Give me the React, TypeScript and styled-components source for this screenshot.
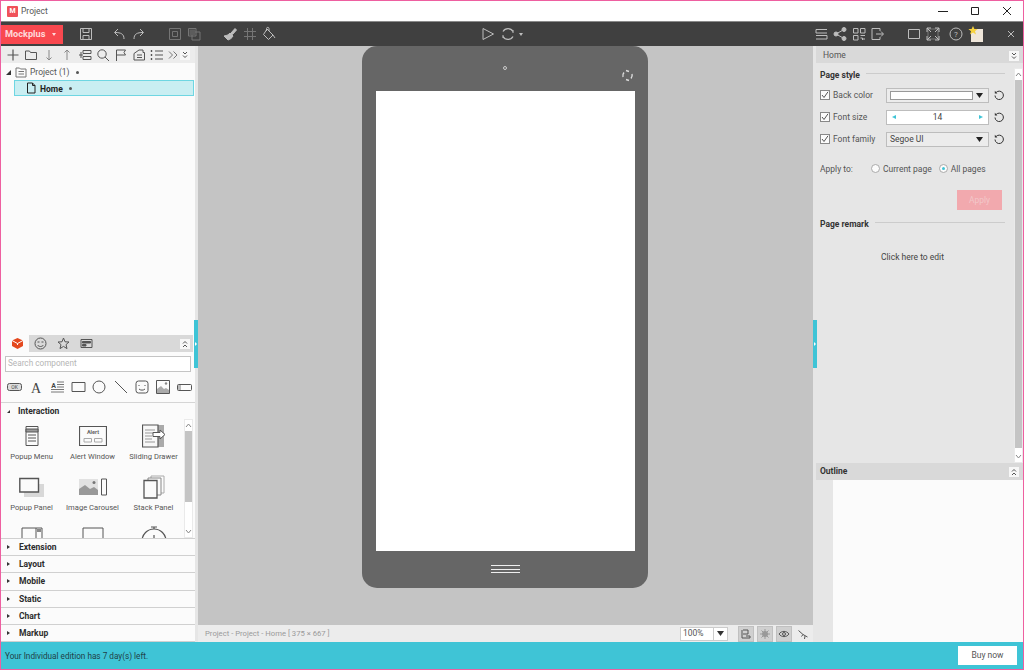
import type { ReactNode } from "react";
import styled, { createGlobalStyle } from "styled-components";

const Global = createGlobalStyle`
  html, body { margin: 0; padding: 0; background: #fff; }
  body { font-family: Roboto, "Noto Sans", sans-serif; font-size: 8.5px; line-height: 1.2; color: #444; }
  * { box-sizing: border-box; }
`;

const Window = styled.div`
  width: 1024px;
  height: 670px;
  display: flex;
  flex-direction: column;
  overflow: hidden;
  border: 1px solid #ee5fa0;
  background: #fff;
`;

const TitleBar = styled.div`
  height: 20px;
  flex-shrink: 0;
  display: flex;
  align-items: center;
  padding-left: 6px;
  background: #fff;
`;

const AppLogo = styled.span`
  width: 11px;
  height: 11px;
  background: #f0525a;
  color: #fff;
  font-size: 7px;
  font-weight: 700;
  line-height: 11px;
  text-align: center;
  border-radius: 1px;
`;

const TitleText = styled.span`
  margin-left: 3px;
  font-size: 8.5px;
  color: #555;
`;

const WinButtons = styled.div`
  margin-left: auto;
  display: flex;
`;

const WinButton = styled.div`
  width: 32px;
  height: 20px;
  display: flex;
  align-items: center;
  justify-content: center;
  color: #222;
`;

const Toolbar = styled.div`
  height: 25px;
  flex-shrink: 0;
  display: flex;
  align-items: center;
  background: #404040;
  border-top: 1px solid #8a8a8a;
`;

const BrandButton = styled.div`
  width: 62px;
  height: 19px;
  display: flex;
  align-items: center;
  padding-left: 4px;
  gap: 7px;
  background: #f9484f;
  color: #ffd9db;
  font-size: 9.2px;
  font-weight: 700;
`;

const Caret = styled.span`
  width: 0;
  height: 0;
  border-left: 2.5px solid transparent;
  border-right: 2.5px solid transparent;
  border-top: 3px solid currentColor;
`;

const Tool = styled.div<{ $ml?: number; $w?: number; $dim?: boolean }>`
  width: ${({ $w }) => $w ?? 18}px;
  height: 18px;
  flex-shrink: 0;
  margin-left: ${({ $ml }) => $ml ?? 0}px;
  display: flex;
  align-items: center;
  justify-content: center;
  color: ${({ $dim }) => ($dim ? "#757575" : "#bdbdbd")};
`;

const Main = styled.div`
  flex: 1;
  min-height: 0;
  display: flex;
  position: relative;
`;

const LeftPanel = styled.div`
  width: 194px;
  flex-shrink: 0;
  display: flex;
  flex-direction: column;
  background: #fbfbfb;
`;

const LeftTools = styled.div`
  height: 17px;
  flex-shrink: 0;
  display: flex;
  align-items: center;
  padding-left: 3px;
  background: #ececec;
  color: #444;
`;

const SmallTool = styled.div<{ $ml?: number; $w?: number; $c?: string }>`
  width: ${({ $w }) => $w ?? 18}px;
  height: 16px;
  margin-left: ${({ $ml }) => $ml ?? 0}px;
  flex-shrink: 0;
  display: flex;
  align-items: center;
  justify-content: center;
  color: ${({ $c }) => $c ?? "#555"};
`;

const Collapse = styled.div<{ $ml?: number }>`
  width: 10px;
  height: 10px;
  margin-left: ${({ $ml }) => $ml ?? 0}px;
  flex-shrink: 0;
  display: flex;
  align-items: center;
  justify-content: center;
  background: #f7f7f7;
  color: #555;
`;

const Tree = styled.div`
  flex: 1;
  display: flex;
  flex-direction: column;
  padding-top: 1px;
`;

const TreeRow = styled.div<{ $selected?: boolean }>`
  height: 16px;
  display: flex;
  align-items: center;
  margin-left: ${({ $selected }) => ($selected ? 13 : 3)}px;
  margin-right: 1px;
  background: ${({ $selected }) => ($selected ? "#c9eef2" : "transparent")};
  border: 1px solid ${({ $selected }) => ($selected ? "#6ed6e2" : "transparent")};
`;

const TreeArrow = styled.span`
  width: 0;
  height: 0;
  margin-left: 1px;
  border-left: 5px solid transparent;
  border-bottom: 5px solid #333;
`;

const TreeLabel = styled.span<{ $bold?: boolean }>`
  margin-left: 2px;
  margin-top: ${({ $bold }) => ($bold ? 2 : 0)}px;
  font-weight: ${({ $bold }) => ($bold ? 700 : 400)};
  color: ${({ $bold }) => ($bold ? "#222" : "#555")};
`;

const TreeDot = styled.span`
  width: 3px;
  height: 3px;
  margin-left: 6px;
  border-radius: 50%;
  background: #555;
`;

const Library = styled.div`
  height: 307px;
  flex-shrink: 0;
  display: flex;
  flex-direction: column;
`;

const LibTabs = styled.div`
  height: 17px;
  flex-shrink: 0;
  margin: 0 2px 0 4px;
  display: flex;
  align-items: stretch;
  background: #d9d9d9;
`;

const LibTab = styled.div<{ $active?: boolean; $w?: number }>`
  width: ${({ $w }) => $w ?? 23}px;
  display: flex;
  align-items: center;
  justify-content: center;
  background: ${({ $active }) => ($active ? "#fbfbfb" : "transparent")};
  color: #555;
`;

const LibCollapse = styled.div`
  margin-left: auto;
  margin-right: 3px;
  display: flex;
  align-items: center;
`;

const SearchBox = styled.div`
  height: 16px;
  margin: 4px 4px 0 4px;
  flex-shrink: 0;
  display: flex;
  align-items: center;
  padding-left: 2px;
  background: #fff;
  border: 1px solid #c4c4c4;
  color: #b5b5b5;
  font-size: 8.2px;
`;

const ShapeRow = styled.div`
  height: 31px;
  flex-shrink: 0;
  display: flex;
  align-items: center;
  padding-left: 3px;
  border-bottom: 1px solid #d5d5d5;
  color: #555;
`;

const Shape = styled.div`
  width: 21.4px;
  display: flex;
  align-items: center;
  justify-content: center;
`;

const SectionHead = styled.div<{ $open?: boolean }>`
  flex-shrink: 0;
  height: ${({ $open }) => ($open ? 16 : 17.2)}px;
  display: flex;
  align-items: center;
  padding-left: 6px;
  font-weight: 700;
  color: #2c2c2c;
  background: #fbfbfb;
  border-bottom: ${({ $open }) => ($open ? "none" : "1px solid #d0d0d0")};
`;

const SectionArrow = styled.span<{ $open?: boolean }>`
  width: 0;
  height: 0;
  margin-right: 8px;
  ${({ $open }) =>
    $open
      ? "border-left: 3.5px solid transparent; border-bottom: 3.5px solid #333;"
      : "border-left: 3px solid #333; border-top: 2px solid transparent; border-bottom: 2px solid transparent; margin-right: 9px;"}
`;

const InteractionBody = styled.div`
  height: 119px;
  flex-shrink: 0;
  display: flex;
  overflow: hidden;
`;

const CompGrid = styled.div`
  width: 183px;
  display: grid;
  grid-template-columns: repeat(3, 61px);
  grid-auto-rows: 51px;
  padding-top: 4px;
`;

const Comp = styled.div`
  display: flex;
  flex-direction: column;
  align-items: center;
  color: #555;
`;

const CompIcon = styled.div`
  height: 26px;
  width: 50px;
  display: flex;
  align-items: center;
  justify-content: center;
`;

const CompLabel = styled.div`
  margin-top: 3px;
  font-size: 7.6px;
  white-space: nowrap;
  color: #555;
`;

const Scroll = styled.div<{ $w?: number }>`
  width: ${({ $w }) => $w ?? 9}px;
  flex-shrink: 0;
  display: flex;
  flex-direction: column;
  align-items: stretch;
  justify-content: space-between;
  background: #fff;
  border: 1px solid #eaeaea;
`;

const ScrollTop = styled.div`
  display: flex;
  flex-direction: column;
`;

const ScrollBtn = styled.div`
  height: 11px;
  flex-shrink: 0;
  display: flex;
  align-items: center;
  justify-content: center;
  color: #888;
`;

const ScrollThumb = styled.div<{ $h: number }>`
  height: ${({ $h }) => $h}px;
  background: #c4c4c4;
`;

const Sections = styled.div`
  flex: 1;
  display: flex;
  flex-direction: column;
  border-top: 1px solid #d0d0d0;
`;

const Gutter = styled.div`
  width: 3px;
  flex-shrink: 0;
  background: #e6e6e6;
`;

const Handle = styled.div<{ $left: number; $w: number }>`
  position: absolute;
  left: ${({ $left }) => $left}px;
  top: 274px;
  width: ${({ $w }) => $w}px;
  height: 48px;
  background: #3fc4d6;
  display: flex;
  align-items: center;
  justify-content: center;

  &::after {
    content: "";
    border-left: 2px solid #fff;
    border-top: 2px solid transparent;
    border-bottom: 2px solid transparent;
  }
`;

const Center = styled.div`
  flex: 1;
  min-width: 0;
  display: flex;
  flex-direction: column;
`;

const Canvas = styled.div`
  flex: 1;
  min-height: 0;
  display: flex;
  justify-content: center;
  padding-right: 2px;
  background: #c4c4c4;
`;

const Phone = styled.div`
  position: relative;
  width: 286px;
  height: 542px;
  padding: 45px 13px 37px 14px;
  border-radius: 15px;
  background: #666;
`;

const Camera = styled.span`
  position: absolute;
  top: 20px;
  left: 141px;
  width: 4px;
  height: 4px;
  border-radius: 50%;
  border: 1px solid #ccc;
`;

const Rotate = styled.div`
  position: absolute;
  top: 23px;
  right: 14px;
  color: #ddd;
  display: flex;
`;

const Screen = styled.div`
  height: 100%;
  background: #fff;
`;

const HomeLines = styled.div`
  position: absolute;
  bottom: 15px;
  left: 129px;
  width: 29px;
  height: 8px;
  border-top: 1px solid #eee;
  border-bottom: 1px solid #eee;
  display: flex;
  align-items: center;

  &::before {
    content: "";
    width: 100%;
    height: 1px;
    background: #eee;
  }
`;

const StatusBar = styled.div`
  height: 17px;
  flex-shrink: 0;
  display: flex;
  align-items: center;
  padding-left: 7px;
  background: #ececec;
  color: #9a9a9a;
  font-size: 7.7px;
`;

const ZoomSelect = styled.div`
  margin-left: auto;
  width: 48px;
  height: 14px;
  display: flex;
  align-items: center;
  background: #fff;
  border: 1px solid #ccc;
  color: #555;
  font-size: 8.5px;
  padding-left: 2px;
`;

const ZoomArrow = styled.div`
  margin-left: auto;
  width: 14px;
  height: 100%;
  border-left: 1px solid #ccc;
  display: flex;
  align-items: center;
  justify-content: center;
  color: #333;
`;

const ToggleRow = styled.div`
  margin-left: 10px;
  margin-right: 2px;
  display: flex;
  align-items: center;
  gap: 3px;
`;

const Toggle = styled.div<{ $on?: boolean }>`
  width: 16px;
  height: 16px;
  display: flex;
  align-items: center;
  justify-content: center;
  background: ${({ $on }) => ($on ? "#d0d0d0" : "transparent")};
  border: 1px solid ${({ $on }) => ($on ? "#c0c0c0" : "transparent")};
  color: #555;
`;

const RightPanel = styled.div`
  width: 210px;
  flex-shrink: 0;
  display: flex;
  flex-direction: column;
  background: #e6e6e6;
  padding-left: 3px;
`;

const PanelHead = styled.div`
  height: 17px;
  flex-shrink: 0;
  display: flex;
  align-items: center;
  justify-content: space-between;
  padding: 2px 4px 0 7px;
  background: #d9d9d9;
  color: #555;
`;

const OutlineHead = styled(PanelHead)`
  padding: 0 4px 0 4px;
  font-weight: 700;
  color: #333;
`;

const StyleArea = styled.div`
  height: 400px;
  flex-shrink: 0;
  display: flex;
  padding-top: 5px;
`;

const Props = styled.div`
  flex: 1;
  padding: 0 9px 0 4px;
  display: flex;
  flex-direction: column;
`;

const GroupTitle = styled.div`
  display: flex;
  align-items: center;
  gap: 6px;
  font-weight: 700;
  color: #333;
  height: 14px;
  margin-bottom: 2px;

  &::after {
    content: "";
    flex: 1;
    height: 1px;
    background: #cccccc;
    margin-top: -3px;
  }
`;

const PropRow = styled.div`
  height: 22px;
  display: flex;
  align-items: center;
`;

const Check = styled.span`
  width: 10px;
  height: 10px;
  flex-shrink: 0;
  display: flex;
  align-items: center;
  justify-content: center;
  background: #fbfbfb;
  border: 1px solid #888;
  color: #555;
`;

const PropLabel = styled.span`
  margin-left: 3px;
  width: 53px;
  flex-shrink: 0;
  color: #555;
`;

const Field = styled.div<{ $bg?: string }>`
  width: 103px;
  height: 15px;
  display: flex;
  align-items: center;
  padding: 0 3px;
  background: ${({ $bg }) => $bg ?? "#fff"};
  border: 1px solid #bdbdbd;
  color: #444;
`;

const Swatch = styled.span`
  flex: 1;
  height: 9px;
  background: #fff;
  border: 1px solid #999;
`;

const SelectArrow = styled.span`
  margin-left: auto;
  width: 12px;
  display: flex;
  justify-content: center;
  color: #222;
`;

const Spin = styled.span`
  width: 0;
  height: 0;
  border-top: 2.5px solid transparent;
  border-bottom: 2.5px solid transparent;
`;

const SpinLeft = styled(Spin)`
  border-right: 4px solid #3fc4d6;
  margin-left: 2px;
`;

const SpinRight = styled(Spin)`
  border-left: 4px solid #3fc4d6;
  margin-right: 2px;
`;

const SpinValue = styled.span`
  flex: 1;
  text-align: center;
`;

const Reset = styled.div`
  margin-left: 4px;
  display: flex;
  color: #333;
`;

const ApplyRow = styled.div`
  margin-top: 11px;
  height: 16px;
  display: flex;
  align-items: center;
  color: #555;
`;

const ApplyLabel = styled.span`
  width: 51px;
`;

const Radio = styled.span<{ $on?: boolean; $ml?: number }>`
  width: 9px;
  height: 9px;
  margin-left: ${({ $ml }) => $ml ?? 0}px;
  margin-top: -2px;
  flex-shrink: 0;
  display: flex;
  align-items: center;
  justify-content: center;
  border-radius: 50%;
  background: #fbfbfb;
  border: 1px solid #aaa;

  &::after {
    content: "";
    display: ${({ $on }) => ($on ? "block" : "none")};
    width: 3px;
    height: 3px;
    border-radius: 50%;
    background: #3fc4d6;
  }
`;

const RadioLabel = styled.span`
  margin-left: 3px;
`;

const ApplyButton = styled.div`
  margin: 13px 3px 0 auto;
  width: 45px;
  height: 20px;
  display: flex;
  align-items: center;
  justify-content: center;
  background: #f2a9ae;
  color: #f3c7c9;
`;

const RemarkTitle = styled(GroupTitle)`
  margin-top: 7px;
  margin-bottom: 0;
`;

const EditHint = styled.div`
  margin-top: 21px;
  text-align: center;
  color: #444;
`;

const OutlineBody = styled.div`
  flex: 1;
  margin-left: 17px;
  background: #fbfbfb;
`;

const BottomBar = styled.div`
  height: 27px;
  flex-shrink: 0;
  display: flex;
  align-items: center;
  justify-content: space-between;
  padding: 0 6px 0 4px;
  background: #3fc4d6;
  color: #1f3f46;
`;

const TrialText = styled.span`
  margin-top: 2px;
  font-size: 8.2px;
`;

const BuyButton = styled.div`
  width: 59px;
  height: 19px;
  display: flex;
  align-items: center;
  justify-content: center;
  background: #fff;
  color: #555;
`;

function Ico({ size = 16, children, w }: { size?: number; w?: number; children: ReactNode }) {
  return (
    <svg
      width={w ?? size}
      height={size}
      viewBox={`0 0 ${w ?? size} ${size}`}
      fill="none"
      stroke="currentColor"
      strokeWidth="1"
    >
      {children}
    </svg>
  );
}

const Chevrons = ({ up }: { up?: boolean }) => (
  <Ico size={8}>
    {up ? <path d="M2 3.5 4 1.5 6 3.5M2 7 4 5 6 7" /> : <path d="M2 1 4 3 6 1M2 4.5 4 6.5 6 4.5" />}
  </Ico>
);

const ResetIcon = () => (
  <Ico size={12}>
    <path d="M3.2 3.4A4.2 4.2 0 1 1 2 6.5" />
    <path d="M1.8 1.8V4.4H4.4" fill="currentColor" stroke="none" />
  </Ico>
);

const Tick = () => (
  <Ico size={8}>
    <path d="M1 4 3 6.5 7 .8" />
  </Ico>
);

const DownCaret = () => (
  <svg width="7" height="5" viewBox="0 0 7 5">
    <path d="M0 0H7L3.5 5Z" fill="currentColor" />
  </svg>
);

const sections = ["Extension", "Layout", "Mobile", "Static", "Chart", "Markup"];

// the third row is scrolled past the edge of the list, so its labels are not in view
const comps: { id: string; label?: string; icon: ReactNode }[] = [
  {
    id: "popup-menu",
    label: "Popup Menu",
    icon: (
      <Ico size={22} w={16}>
        <path d="M2 1.5H14V20.5H2Z" />
        <path d="M2 4H14V7H2Z" fill="#999" />
        <path d="M4 10H12M4 13H12M4 16H12" />
      </Ico>
    ),
  },
  {
    id: "alert",
    label: "Alert Window",
    icon: (
      <svg width="28" height="22" viewBox="0 0 28 22" fill="none" stroke="#555">
        <path d="M.5 1.5H27.5V20.5H.5Z" strokeWidth="1.2" />
        <text x="14" y="8.5" fontSize="5.5" fontWeight="700" textAnchor="middle" fill="#666" stroke="none">
          Alert
        </text>
        <path d="M5 13.5H12.5V17H5ZM15.5 13.5H23V17H15.5Z" stroke="#aaa" />
      </svg>
    ),
  },
  {
    id: "drawer",
    label: "Sliding Drawer",
    icon: (
      <svg width="24" height="24" viewBox="0 0 24 24" fill="none" stroke="#555">
        <path d="M15 1H22V23H15Z" fill="#aaa" stroke="none" />
        <path d="M.5 1H16V23H.5Z" strokeWidth="1.2" fill="#f8f8f8" />
        <path d="M3 6H13M3 9H13M3 12H10M3 15H10M3 18H13" stroke="#999" />
        <path d="M11 8.5H18V6L23 10.5 18 15V12.5H11Z" fill="#fff" />
      </svg>
    ),
  },
  {
    id: "popup-panel",
    label: "Popup Panel",
    icon: (
      <svg width="26" height="22" viewBox="0 0 26 22" fill="none" stroke="#555">
        <path d="M5 8H25V21H5Z" fill="#d8d8d8" stroke="none" />
        <path d="M.8 2.5H19.5V16H.8Z" fill="#fbfbfb" strokeWidth="1.4" />
      </svg>
    ),
  },
  {
    id: "carousel",
    label: "Image Carousel",
    icon: (
      <svg width="28" height="18" viewBox="0 0 28 18" fill="none" stroke="#555">
        <path d="M0 1H19V17H0Z" fill="#e2e2e2" stroke="none" />
        <path d="M0 17V11L6 7 11 11 15 9 19 12V17Z" fill="#999" stroke="none" />
        <circle cx="15" cy="4.5" r="1.5" fill="#777" stroke="none" />
        <path d="M22.5 1H27.5V17H22.5Z" />
      </svg>
    ),
  },
  {
    id: "stack",
    label: "Stack Panel",
    icon: (
      <svg width="22" height="24" viewBox="0 0 22 24" fill="none" stroke="#555">
        <path d="M8 1H21V18H8Z" stroke="#aaa" />
        <path d="M5 3H18V20H5Z" stroke="#888" fill="#fbfbfb" />
        <path d="M1 5.5H14V23H1Z" strokeWidth="1.3" fill="#fbfbfb" />
      </svg>
    ),
  },
  {
    id: "third-a",
    icon: (
      <svg width="22" height="24" viewBox="0 0 22 24" fill="none" stroke="#555">
        <path d="M1 2H21V24H1ZM15 2V24" />
        <path d="M16 3H20V6H16Z" fill="#888" stroke="none" />
      </svg>
    ),
  },
  {
    id: "third-b",
    icon: (
      <svg width="22" height="24" viewBox="0 0 22 24" fill="none" stroke="#555">
        <path d="M1 2H21V24H1Z" />
      </svg>
    ),
  },
  {
    id: "third-c",
    icon: (
      <svg width="26" height="24" viewBox="0 0 26 24" fill="none" stroke="#555" strokeWidth="1.2">
        <circle cx="13" cy="15" r="12" />
        <path d="M10 1H16M13 1V3M13 9V15" />
      </svg>
    ),
  },
];

export default function App() {
  return (
    <>
      <Global />
      <Window>
        <TitleBar>
          <AppLogo>M</AppLogo>
          <TitleText>Project</TitleText>
          <WinButtons>
            <WinButton>
              <Ico size={10}>
                <path d="M0 5.5H10" />
              </Ico>
            </WinButton>
            <WinButton>
              <Ico size={10}>
                <path d="M1.5 1.5H8.5V8.5H1.5Z" />
              </Ico>
            </WinButton>
            <WinButton>
              <Ico size={10}>
                <path d="M1 1 9 9M9 1 1 9" />
              </Ico>
            </WinButton>
          </WinButtons>
        </TitleBar>

        <Toolbar>
          <BrandButton>
            Mockplus
            <Caret />
          </BrandButton>
          <Tool $ml={14}>
            <Ico>
              <path d="M2.5 2.5H13.5V13.5H2.5Z" />
              <path d="M5 2.5V6.5H11V2.5M5 13.5V9.5H11V13.5" />
            </Ico>
          </Tool>
          <Tool $ml={15}>
            <Ico>
              <path d="M13 13C13 8 10 6.5 4 6.5" />
              <path d="M7 3 3.5 6.5 7 10" />
            </Ico>
          </Tool>
          <Tool $ml={2}>
            <Ico>
              <path d="M3 13C3 8 6 6.5 12 6.5" />
              <path d="M9 3 12.5 6.5 9 10" />
            </Ico>
          </Tool>
          <Tool $ml={18} $dim>
            <Ico>
              <path d="M2.5 2.5H13.5V13.5H2.5Z" />
              <path d="M5.5 5.5H10.5V10.5H5.5Z" />
            </Ico>
          </Tool>
          <Tool $ml={1} $dim>
            <Ico>
              <path d="M2.5 2.5H10V10H2.5Z" />
              <path d="M6 6H14V14H6Z" />
              <path d="M3.5 3.5H9V9H3.5Z" fill="#5c5c5c" stroke="none" />
            </Ico>
          </Tool>
          <Tool $ml={18}>
            <Ico>
              <path d="M9 7 13 2.5 14.5 4 10.5 8.5Z" fill="currentColor" />
              <path d="M2 10C5 9.5 7 8.5 8 7L11 10C10 12 8 13.5 6 14Z" fill="currentColor" />
            </Ico>
          </Tool>
          <Tool $ml={2} $dim>
            <Ico>
              <path d="M5.5 2V14M10.5 2V14M2 5.5H14M2 10.5H14" />
            </Ico>
          </Tool>
          <Tool $ml={1}>
            <Ico>
              <path d="M6 3 12 9 7.5 13.5 2.5 8.5Z" />
              <path d="M5.5 5V2.5C5.5 1 8 1 8 2.5V5M12 9 14 12" />
            </Ico>
          </Tool>
          <Tool $ml={201}>
            <Ico>
              <path d="M3 2.5 13.5 8 3 13.5Z" />
            </Ico>
          </Tool>
          <Tool $ml={2}>
            <Ico>
              <path d="M3 5.5A5.7 5.7 0 0 1 13 5.5M13 10.5A5.7 5.7 0 0 1 3 10.5" strokeWidth="1.2" />
              <path d="M13 4V7M3 9V12" />
            </Ico>
          </Tool>
          <Tool $ml={-2} $w={12}>
            <Caret />
          </Tool>
          <Tool $ml={285}>
            <Ico>
              <path d="M3 3.5H14M3 3.5V7H14M14 9.5H3M14 9.5V13H3" />
            </Ico>
          </Tool>
          <Tool $ml={1}>
            <Ico>
              <circle cx="4" cy="8" r="2" fill="currentColor" />
              <circle cx="12" cy="3.5" r="2" fill="currentColor" />
              <circle cx="12" cy="12.5" r="2" fill="currentColor" />
              <path d="M4 8 12 3.5M4 8 12 12.5" />
            </Ico>
          </Tool>
          <Tool $ml={1}>
            <Ico>
              <path d="M2.5 2.5H7V7H2.5ZM9.5 2.5H14V7H9.5ZM2.5 9.5H7V14H2.5Z" />
              <path d="M9.5 9.5H14M9.5 12H11.5V14M13 12V14" />
            </Ico>
          </Tool>
          <Tool $ml={0}>
            <Ico>
              <path d="M11 5V2.5H3V13.5H11V11" />
              <path d="M7 8H14M12 5.5 14.5 8 12 10.5" />
            </Ico>
          </Tool>
          <Tool $ml={19}>
            <Ico size={14}>
              <path d="M1.5 2.5H12.5V11.5H1.5Z" />
            </Ico>
          </Tool>
          <Tool $ml={1}>
            <Ico size={14}>
              <path d="M2 2H12V12H2Z" stroke="#777" />
              <path d="M1 5V1H5M9 1H13V5M13 9V13H9M5 13H1V9M1 1 5 5M13 1 9 5M13 13 9 9M1 13 5 9" />
            </Ico>
          </Tool>
          <Tool $ml={5}>
            <svg width="14" height="14" viewBox="0 0 14 14" fill="none" stroke="currentColor">
              <circle cx="7" cy="7" r="6" />
              <text x="7" y="10" fontSize="8" textAnchor="middle" fill="currentColor" stroke="none">
                ?
              </text>
            </svg>
          </Tool>
          <Tool $ml={2}>
            <svg width="16" height="16" viewBox="0 0 16 16">
              <path d="M3 3H15V16H3Z" fill="#efe6da" />
              <path d="M5 0 6.4 3H9.6L7 5.2 8 8.5 5 6.6 2 8.5 3 5.2.4 3H3.6Z" fill="#f7d23e" />
            </svg>
          </Tool>
          <Tool $ml={17}>
            <Ico size={8}>
              <path d="M1 1 7 7M7 1 1 7" />
            </Ico>
          </Tool>
        </Toolbar>

        <Main>
          <LeftPanel>
            <LeftTools>
              <SmallTool>
                <Ico size={14}>
                  <path d="M7 1.5V12.5M1.5 7H12.5" strokeWidth="1.2" />
                </Ico>
              </SmallTool>
              <SmallTool>
                <Ico size={14}>
                  <path d="M1.5 3H5.5L6.5 4.5H12.5V11.5H1.5Z" />
                </Ico>
              </SmallTool>
              <SmallTool $c="#888">
                <Ico size={14}>
                  <path d="M7 2V12M4.5 9.5 7 12 9.5 9.5" />
                </Ico>
              </SmallTool>
              <SmallTool $c="#888">
                <Ico size={14}>
                  <path d="M7 12V2M4.5 4.5 7 2 9.5 4.5" />
                </Ico>
              </SmallTool>
              <SmallTool>
                <Ico size={14}>
                  <path d="M5 2.5H13V5.5H5ZM5 8.5H13V11.5H5ZM1 7H5M3 4V10" />
                </Ico>
              </SmallTool>
              <SmallTool>
                <Ico size={14}>
                  <circle cx="6" cy="6" r="4.2" />
                  <path d="M9 9 13 13" />
                </Ico>
              </SmallTool>
              <SmallTool>
                <Ico size={14}>
                  <path d="M2.5 13V2H11.5L10 4.5 11.5 7H2.5" />
                </Ico>
              </SmallTool>
              <SmallTool>
                <Ico size={14}>
                  <path d="M2 5.5 7 2H11V4.5H12.5V12H2ZM5 7H10M5 9.5H10" />
                </Ico>
              </SmallTool>
              <SmallTool>
                <Ico size={14}>
                  <path d="M5 3H13M5 7H13M5 11H13" />
                  <path d="M1.5 2V4M1.5 6V8M1.5 10V12" strokeWidth="1.4" />
                </Ico>
              </SmallTool>
              <SmallTool $w={14} $c="#777">
                <Ico size={10}>
                  <path d="M1 1.5 4.5 5 1 8.5M5.5 1.5 9 5 5.5 8.5" />
                </Ico>
              </SmallTool>
              <Collapse>
                <Chevrons />
              </Collapse>
            </LeftTools>
            <Tree>
              <TreeRow>
                <TreeArrow />
                <SmallTool $w={14} $ml={3} $c="#777">
                  <Ico size={12}>
                    <path d="M1 2H4.5L5.5 3H11V11H1ZM3.5 5.5H9M3.5 8H9" />
                  </Ico>
                </SmallTool>
                <TreeLabel>Project (1)</TreeLabel>
                <TreeDot />
              </TreeRow>
              <TreeRow $selected>
                <SmallTool $w={14} $ml={9} $c="#222">
                  <Ico size={12}>
                    <path d="M2.5 1H7.5L10 3.5V11H2.5ZM7.5 1V3.5H10" />
                  </Ico>
                </SmallTool>
                <TreeLabel $bold>Home</TreeLabel>
                <TreeDot />
              </TreeRow>
            </Tree>
            <Library>
              <LibTabs>
                <LibTab $active $w={24}>
                  <svg width="13" height="13" viewBox="0 0 13 13">
                    <path d="M6.5 1 12 3.5V9L6.5 12 1 9V3.5Z" fill="#e4491f" />
                    <path d="M1 3.5 6.5 6.5 12 3.5M6.5 6.5V8" stroke="#fff" strokeWidth="1" fill="none" />
                  </svg>
                </LibTab>
                <LibTab>
                  <Ico size={13}>
                    <circle cx="6.5" cy="6.5" r="5.5" />
                    <path d="M3.5 5H5.5M7.5 5H9.5M3.5 8C5 10 8 10 9.5 8" />
                  </Ico>
                </LibTab>
                <LibTab>
                  <Ico size={13}>
                    <path d="M6.5 1 8 4.8 12 5 9 7.6 10 11.6 6.5 9.4 3 11.6 4 7.6 1 5 5 4.8Z" />
                  </Ico>
                </LibTab>
                <LibTab>
                  <Ico size={13}>
                    <path d="M1 2.5H12V10.5H1Z" />
                    <path d="M2.5 4.5H10.5V6H2.5ZM2.5 7.5H6V9H2.5Z" fill="currentColor" />
                  </Ico>
                </LibTab>
                <LibCollapse>
                  <Collapse>
                    <Chevrons up />
                  </Collapse>
                </LibCollapse>
              </LibTabs>
              <SearchBox>Search component</SearchBox>
              <ShapeRow>
                <Shape>
                  <svg width="15" height="8" viewBox="0 0 15 8" fill="none" stroke="#555">
                    <rect x=".5" y=".5" width="14" height="7" rx="2" fill="#ddd" />
                    <text x="7.5" y="6" fontSize="5" textAnchor="middle" fill="#444" stroke="none">
                      OK
                    </text>
                  </svg>
                </Shape>
                <Shape>
                  <svg width="14" height="16" viewBox="0 0 14 16">
                    <text x="7" y="13.5" fontSize="14" fontFamily="Liberation Serif" textAnchor="middle" fill="#444">
                      A
                    </text>
                  </svg>
                </Shape>
                <Shape>
                  <svg width="15" height="14" viewBox="0 0 15 14" fill="none" stroke="#777">
                    <text x="3.5" y="7.5" fontSize="7" fontWeight="700" textAnchor="middle" fill="#444" stroke="none">
                      A
                    </text>
                    <path d="M7 2H14M7 4.5H14M7 7H14M1 9.5H14M1 12H14" />
                  </svg>
                </Shape>
                <Shape>
                  <Ico size={12} w={15}>
                    <path d="M1 1.5H14V10.5H1Z" />
                  </Ico>
                </Shape>
                <Shape>
                  <Ico size={14}>
                    <circle cx="7" cy="7" r="6" />
                  </Ico>
                </Shape>
                <Shape>
                  <Ico size={14}>
                    <path d="M1 1 13 13" />
                  </Ico>
                </Shape>
                <Shape>
                  <Ico size={14}>
                    <rect x="1" y="1" width="12" height="12" rx="2.5" />
                    <path d="M4 5V6M10 5V6M4 9C5.5 10.5 8.5 10.5 10 9" />
                  </Ico>
                </Shape>
                <Shape>
                  <svg width="14" height="14" viewBox="0 0 14 14" fill="none" stroke="#555">
                    <path d="M.5 .5H13.5V13.5H.5Z" />
                    <path d="M1 13V9L5 6 8 9 10 8 13 10V13Z" fill="#aaa" stroke="none" />
                    <circle cx="10" cy="3.5" r="1.2" fill="#888" stroke="none" />
                  </svg>
                </Shape>
                <Shape>
                  <svg width="15" height="7" viewBox="0 0 15 7" fill="none" stroke="#555">
                    <rect x=".5" y=".5" width="14" height="6" rx="1" />
                    <path d="M1 1H4V6H1Z" fill="#bbb" stroke="none" />
                  </svg>
                </Shape>
              </ShapeRow>
              <SectionHead $open>
                <SectionArrow $open />
                Interaction
              </SectionHead>
              <InteractionBody>
                <CompGrid>
                  {comps.map((c) => (
                    <Comp key={c.id}>
                      <CompIcon>{c.icon}</CompIcon>
                      {c.label && <CompLabel>{c.label}</CompLabel>}
                    </Comp>
                  ))}
                </CompGrid>
                <Scroll>
                  <ScrollTop>
                    <ScrollBtn>
                      <Ico size={7}>
                        <path d="M1 5 3.5 2 6 5" />
                      </Ico>
                    </ScrollBtn>
                    <ScrollThumb $h={71} />
                  </ScrollTop>
                  <ScrollBtn>
                    <Ico size={7}>
                      <path d="M1 2 3.5 5 6 2" />
                    </Ico>
                  </ScrollBtn>
                </Scroll>
              </InteractionBody>
              <Sections>
                {sections.map((s) => (
                  <SectionHead key={s}>
                    <SectionArrow />
                    {s}
                  </SectionHead>
                ))}
              </Sections>
            </Library>
          </LeftPanel>
          <Gutter />

          <Center>
            <Canvas>
              <Phone>
                <Camera />
                <Rotate>
                  <Ico size={13}>
                    <path d="M3 3.5A4.8 4.8 0 0 0 2 8M10 9.5A4.8 4.8 0 0 0 11 5" strokeWidth="1.4" />
                    <path d="M5 1.5 8 2.5M8 11.5 5 10.5" strokeWidth="1.4" />
                  </Ico>
                </Rotate>
                <Screen />
                <HomeLines />
              </Phone>
            </Canvas>
            <StatusBar>
              Project - Project - Home [ 375 × 667 ]
              <ZoomSelect>
                100%
                <ZoomArrow>
                  <DownCaret />
                </ZoomArrow>
              </ZoomSelect>
              <ToggleRow>
                <Toggle $on>
                  <Ico size={12}>
                    <path d="M2 2V10H10M3 2H8V6H3M6 8H10V10" />
                  </Ico>
                </Toggle>
                <Toggle $on>
                  <Ico size={12}>
                    <circle cx="6" cy="6" r="3" fill="#999" stroke="none" />
                    <path d="M6 1V11M1 6H11M2.5 2.5 9.5 9.5M9.5 2.5 2.5 9.5" stroke="#999" />
                  </Ico>
                </Toggle>
                <Toggle $on>
                  <Ico size={12}>
                    <path d="M1 6C3.5 2.5 8.5 2.5 11 6 8.5 9.5 3.5 9.5 1 6Z" />
                    <circle cx="6" cy="6" r="1.5" />
                  </Ico>
                </Toggle>
                <Toggle>
                  <Ico size={12}>
                    <path d="M1.5 2.5 6 6.5 10.5 9M6 6.5 4.5 8.5M8 8 7.5 11" />
                  </Ico>
                </Toggle>
              </ToggleRow>
            </StatusBar>
          </Center>

          <RightPanel>
            <PanelHead>
              Home
              <Collapse>
                <Chevrons />
              </Collapse>
            </PanelHead>
            <StyleArea>
              <Props>
                <GroupTitle>Page style</GroupTitle>
                <PropRow>
                  <Check>
                    <Tick />
                  </Check>
                  <PropLabel>Back color</PropLabel>
                  <Field $bg="#ececec">
                    <Swatch />
                    <SelectArrow>
                      <DownCaret />
                    </SelectArrow>
                  </Field>
                  <Reset>
                    <ResetIcon />
                  </Reset>
                </PropRow>
                <PropRow>
                  <Check>
                    <Tick />
                  </Check>
                  <PropLabel>Font size</PropLabel>
                  <Field>
                    <SpinLeft />
                    <SpinValue>14</SpinValue>
                    <SpinRight />
                  </Field>
                  <Reset>
                    <ResetIcon />
                  </Reset>
                </PropRow>
                <PropRow>
                  <Check>
                    <Tick />
                  </Check>
                  <PropLabel>Font family</PropLabel>
                  <Field $bg="#ececec">
                    Segoe UI
                    <SelectArrow>
                      <DownCaret />
                    </SelectArrow>
                  </Field>
                  <Reset>
                    <ResetIcon />
                  </Reset>
                </PropRow>
                <ApplyRow>
                  <ApplyLabel>Apply to:</ApplyLabel>
                  <Radio />
                  <RadioLabel>Current page</RadioLabel>
                  <Radio $on $ml={7} />
                  <RadioLabel>All pages</RadioLabel>
                </ApplyRow>
                <ApplyButton>Apply</ApplyButton>
                <RemarkTitle>Page remark</RemarkTitle>
                <EditHint>Click here to edit</EditHint>
              </Props>
              <Scroll $w={9}>
                <ScrollTop>
                  <ScrollBtn>
                    <Ico size={7}>
                      <path d="M1 5 3.5 2 6 5" />
                    </Ico>
                  </ScrollBtn>
                  <ScrollThumb $h={368} />
                </ScrollTop>
                <ScrollBtn>
                  <Ico size={7}>
                    <path d="M1 2 3.5 5 6 2" />
                  </Ico>
                </ScrollBtn>
              </Scroll>
            </StyleArea>
            <OutlineHead>
              Outline
              <Collapse>
                <Chevrons up />
              </Collapse>
            </OutlineHead>
            <OutlineBody />
          </RightPanel>
          <Handle $left={193} $w={4} />
          <Handle $left={812} $w={4} />
        </Main>

        <BottomBar>
          <TrialText>Your Individual edition has 7 day(s) left.</TrialText>
          <BuyButton>Buy now</BuyButton>
        </BottomBar>
      </Window>
    </>
  );
}
